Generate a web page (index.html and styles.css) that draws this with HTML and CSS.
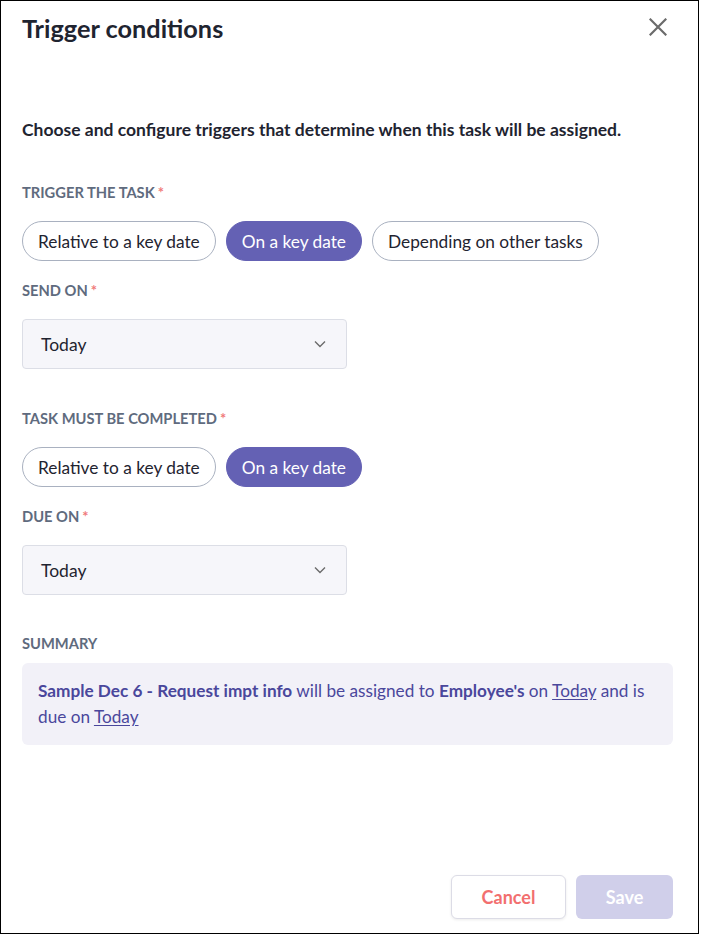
FILE: index.html
```html
<!DOCTYPE html>
<html>
<head>
<meta charset="utf-8">
<link rel="stylesheet" href="styles.css">
</head>
<body>
<div class="modal">
  <div class="header">
    <h1 class="title">Trigger conditions</h1>
    <svg class="close" width="18" height="18" viewBox="0 0 18 18"><path d="M1.5 1.5 L16.5 16.5 M16.5 1.5 L1.5 16.5" stroke="#6b6b6b" stroke-width="2.2" stroke-linecap="square" fill="none"/></svg>
  </div>
  <p class="desc">Choose and configure triggers that determine when this task will be assigned.</p>

  <div class="label">TRIGGER THE TASK<span class="req">*</span></div>
  <div class="pills">
    <span class="pill">Relative to a key date</span>
    <span class="pill active">On a key date</span>
    <span class="pill">Depending on other tasks</span>
  </div>

  <div class="label">SEND ON<span class="req">*</span></div>
  <div class="select">
    <span>Today</span>
    <svg width="12" height="8" viewBox="0 0 12 8"><path d="M1 1.5 L6 6.5 L11 1.5" stroke="#6b6b6b" stroke-width="1.4" fill="none"/></svg>
  </div>

  <div class="label gap-big">TASK MUST BE COMPLETED<span class="req">*</span></div>
  <div class="pills">
    <span class="pill">Relative to a key date</span>
    <span class="pill active">On a key date</span>
  </div>

  <div class="label">DUE ON<span class="req">*</span></div>
  <div class="select">
    <span>Today</span>
    <svg width="12" height="8" viewBox="0 0 12 8"><path d="M1 1.5 L6 6.5 L11 1.5" stroke="#6b6b6b" stroke-width="1.4" fill="none"/></svg>
  </div>

  <div class="label gap-big summary-label">SUMMARY</div>
  <div class="summary">
    <b>Sample Dec 6 - Request impt info</b> will be assigned to <b>Employee's</b> on <u>Today</u> and is due on <u>Today</u>
  </div>

  <div class="footer">
    <button class="btn cancel">Cancel</button>
    <button class="btn save">Save</button>
  </div>
</div>
</body>
</html>
```

FILE: styles.css
```css
html, body {
  margin: 0;
  padding: 0;
  background: #fff;
}
body {
  font-family: Lato, "Open Sans", sans-serif;
  color: #1f2430;
}
.modal {
  box-sizing: border-box;
  width: 699px;
  height: 934px;
  border: 1px solid #000;
  padding: 13px 25px 14px 21px;
  display: flex;
  flex-direction: column;
}
.header {
  display: flex;
  justify-content: space-between;
  align-items: center;
  height: 28px;
}
.title {
  margin: 0;
  font-size: 25.3px;
  line-height: 28px;
  font-weight: 700;
  color: #1f2430;
}
.close {
  margin-right: 6px;
  margin-top: -2px;
}
.desc {
  margin: 76px 0 0;
  font-size: 17.5px;
  line-height: 24px;
  font-weight: 700;
  color: #1f2430;
}
.label {
  margin-top: 20px;
  font-size: 14.7px;
  line-height: 18px;
  font-weight: 700;
  color: #5f6b7e;
}
.desc + .label {
  margin-top: 41px;
}
.label.gap-big {
  margin-top: 40px;
}
.label.summary-label {
  margin-top: 39px;
}
.req {
  color: #f07a7a;
  margin-left: 3px;
}
.pills {
  display: flex;
  gap: 10px;
  margin-top: 20px;
}
.pill {
  box-sizing: border-box;
  height: 40px;
  padding: 0 15px;
  border: 1px solid #a9b1c0;
  border-radius: 20px;
  display: flex;
  align-items: center;
  font-size: 17.3px;
  color: #1f2430;
}
.pill.active {
  background: #6461b4;
  border-color: #6461b4;
  color: #fff;
}
.select {
  box-sizing: border-box;
  margin-top: 20px;
  width: 325px;
  height: 50px;
  background: #f6f6fa;
  border: 1px solid #dcdee6;
  border-radius: 4px;
  display: flex;
  align-items: center;
  justify-content: space-between;
  padding: 0 20px 0 18px;
  font-size: 17.5px;
  color: #1f2430;
}
.summary {
  margin-top: 11px;
  background: #f2f1f8;
  border-radius: 6px;
  padding: 15px 16px;
  font-size: 17.2px;
  line-height: 26px;
  color: #4a479c;
}
.summary b {
  font-weight: 700;
}
.summary u {
  text-underline-offset: 2px;
}
.footer {
  margin-top: auto;
  display: flex;
  justify-content: flex-end;
  gap: 10px;
}
.btn {
  box-sizing: border-box;
  height: 44px;
  border-radius: 6px;
  font-family: Lato, "Open Sans", sans-serif;
  font-size: 18px;
  font-weight: 700;
  cursor: pointer;
}
.cancel {
  width: 115px;
  background: #fff;
  border: 1px solid #dcdce6;
  box-shadow: 0 1px 3px rgba(0, 0, 0, 0.08);
  color: #f26f6f;
}
.save {
  width: 97px;
  background: #d0cfea;
  border: none;
  color: #fff;
}
```
